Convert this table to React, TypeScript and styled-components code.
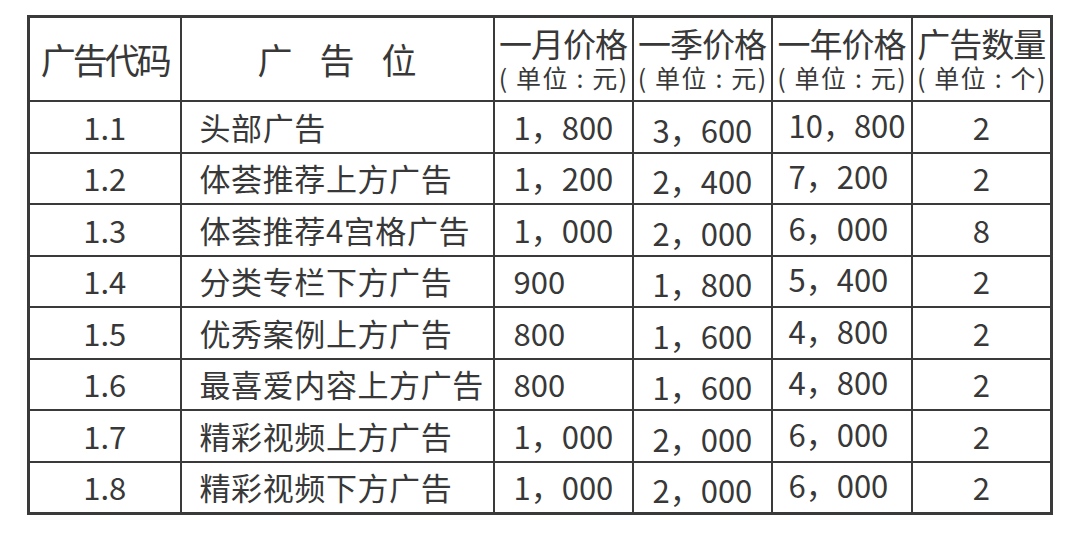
import React from 'react';
import styled, { createGlobalStyle } from 'styled-components';

type AdRow = {
  code: string;
  name: string;
  month: string;
  season: string;
  year: string;
  qty: string;
};

const rows: AdRow[] = [
  { code: '1.1', name: '头部广告', month: '1，800', season: '3，600', year: '10，800', qty: '2' },
  { code: '1.2', name: '体荟推荐上方广告', month: '1，200', season: '2，400', year: '7，200', qty: '2' },
  { code: '1.3', name: '体荟推荐4宫格广告', month: '1，000', season: '2，000', year: '6，000', qty: '8' },
  { code: '1.4', name: '分类专栏下方广告', month: '900', season: '1，800', year: '5，400', qty: '2' },
  { code: '1.5', name: '优秀案例上方广告', month: '800', season: '1，600', year: '4，800', qty: '2' },
  { code: '1.6', name: '最喜爱内容上方广告', month: '800', season: '1，600', year: '4，800', qty: '2' },
  { code: '1.7', name: '精彩视频上方广告', month: '1，000', season: '2，000', year: '6，000', qty: '2' },
  { code: '1.8', name: '精彩视频下方广告', month: '1，000', season: '2，000', year: '6，000', qty: '2' },
];

const priceCols = [
  { title: '一月价格', unit: '元' },
  { title: '一季价格', unit: '元' },
  { title: '一年价格', unit: '元' },
  { title: '广告数量', unit: '个' },
];

const ROW_H = 49.5;

export default function App() {
  return (
    <>
      <GlobalStyle />
      <SPage>
        <STable>
          <colgroup>
            <SCol $w={152} />
            <SCol $w={313} />
            <SCol $w={139} />
            <SCol $w={139} />
            <SCol $w={140} />
            <SCol $w={140} />
          </colgroup>
          <thead>
            <tr>
              <SHeadCell>
                <SHeadTitle $big>广告代码</SHeadTitle>
              </SHeadCell>
              <SHeadCell>
                <SSpread>
                  <span>广</span>
                  <span>告</span>
                  <span>位</span>
                </SSpread>
              </SHeadCell>
              {priceCols.map((col) => (
                <SHeadCell key={col.title}>
                  <SHeadTitle>{col.title}</SHeadTitle>
                  <SHeadUnit>( 单位 : {col.unit})</SHeadUnit>
                </SHeadCell>
              ))}
            </tr>
          </thead>
          <tbody>
            {rows.map((row) => (
              <tr key={row.code}>
                <SCenterCell>{row.code}</SCenterCell>
                <SNameCell>{row.name}</SNameCell>
                <SPriceCell $pad={19} $shift={0}>{row.month}</SPriceCell>
                <SPriceCell $pad={19} $shift={3}>{row.season}</SPriceCell>
                <SPriceCell $pad={16} $shift={-2}>{row.year}</SPriceCell>
                <SCenterCell>{row.qty}</SCenterCell>
              </tr>
            ))}
          </tbody>
        </STable>
      </SPage>
    </>
  );
}

const GlobalStyle = createGlobalStyle`
  html, body {
    margin: 0;
    padding: 0;
    background: #ffffff;
  }
  body {
    font-family: "Noto Sans CJK SC", "Noto Sans", sans-serif;
    color: #383838;
  }
`;

const SPage = styled.div`
  padding: 15px 0 0 27px;
`;

const STable = styled.table`
  border-collapse: collapse;
  table-layout: fixed;
  width: 1023px;
  border: 3px solid #3a3a3a;
`;

const SCol = styled.col<{ $w: number }>`
  width: ${(p) => p.$w}px;
`;

const SHeadCell = styled.th`
  height: 82px;
  padding: 0;
  border: 2px solid #3a3a3a;
  font-weight: normal;
  text-align: center;
  vertical-align: middle;
  white-space: nowrap;
  overflow: hidden;
`;

const SHeadTitle = styled.div<{ $big?: boolean }>`
  font-size: ${(p) => (p.$big ? 35 : 33)}px;
  line-height: ${(p) => (p.$big ? 40 : 36)}px;
  letter-spacing: ${(p) => (p.$big ? -3 : -1)}px;
`;

const SHeadUnit = styled.div`
  font-size: 25px;
  line-height: 32px;
  letter-spacing: 1.6px;
  margin-right: -1.6px;
`;

const SSpread = styled.div`
  display: flex;
  justify-content: center;
  gap: 27px;
  font-size: 35px;
  line-height: 40px;
`;

const SBodyCell = styled.td`
  height: ${ROW_H}px;
  padding: 0;
  border: 2px solid #3a3a3a;
  font-size: 31px;
  line-height: 36px;
  vertical-align: middle;
  white-space: nowrap;
  overflow: hidden;
`;

const SCenterCell = styled(SBodyCell)`
  text-align: center;
`;

const SNameCell = styled(SBodyCell)`
  text-align: left;
  padding-left: 18px;
  letter-spacing: 0.6px;
`;

const SPriceCell = styled(SBodyCell)<{ $pad: number; $shift: number }>`
  height: ${(p) => ROW_H - Math.abs(p.$shift) * 2}px;
  text-align: left;
  padding-left: ${(p) => p.$pad}px;
  padding-top: ${(p) => Math.max(p.$shift, 0) * 2}px;
  padding-bottom: ${(p) => Math.max(-p.$shift, 0) * 2}px;
`;
